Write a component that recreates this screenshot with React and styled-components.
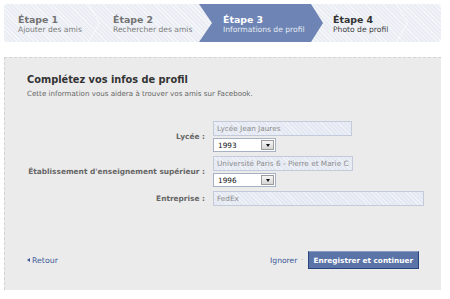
import React from "react";
import styled, { createGlobalStyle } from "styled-components";

const GlobalStyle = createGlobalStyle`
  html, body {
    margin: 0;
    padding: 0;
    background: #fff;
  }
  body {
    font-family: "DejaVu Sans", Tahoma, Verdana, sans-serif;
  }
`;

const Page = styled.div`
  width: 437px;
  padding: 4px 0 0 4px;
`;

const StepBar = styled.div`
  display: flex;
  height: 38px;
  border-radius: 3px;
  overflow: hidden;
  background-color: #eaedf4;
  background-image: repeating-linear-gradient(
    45deg,
    rgba(255, 255, 255, 0.5) 0 1px,
    transparent 1px 3px
  );
`;

const stepColors = {
  done: { title: "#737373", sub: "#7d7d7d" },
  active: { title: "#fff", sub: "#e4e9f2" },
  todo: { title: "#333", sub: "#444" },
};

const Step = styled.div`
  position: relative;
  flex: 0 0 ${(p) => p.$width}px;
  box-sizing: border-box;
  padding: 10px 0 0 ${(p) => p.$pad}px;
  background: ${(p) => (p.$state === "active" ? "#6d84b4" : "transparent")};
  clip-path: ${(p) =>
    p.$state === "active"
      ? "polygon(0 0, calc(100% - 12px) 0, 100% 50%, calc(100% - 12px) 100%, 0 100%, 13px 50%)"
      : "none"};
`;

const StepTitle = styled.div`
  font-weight: bold;
  font-size: 9.4px;
  line-height: 11px;
  white-space: nowrap;
  color: ${(p) => stepColors[p.$state].title};
`;

const StepSub = styled.div`
  font-size: 7.6px;
  line-height: 9px;
  white-space: nowrap;
  color: ${(p) => stepColors[p.$state].sub};
`;

const Chevron = styled.svg`
  position: absolute;
  top: 0;
  right: 0;
`;

const Filler = styled.div`
  flex: 1;
`;

const Panel = styled.section`
  margin-top: 15px;
  height: 233px;
  box-sizing: border-box;
  padding: 15px 22px 21px 22px;
  background: #ebebeb;
  border-top: 1px dashed #d4d4d4;
  border-left: 1px dashed #d4d4d4;
  display: flex;
  flex-direction: column;
`;

const Heading = styled.h2`
  margin: 0;
  font-size: 9.8px;
  line-height: 14px;
  font-weight: bold;
  color: #333;
`;

const Intro = styled.p`
  margin: 2px 0 0;
  font-size: 7.1px;
  line-height: 10px;
  color: #666;
`;

const Form = styled.div`
  display: grid;
  grid-template-columns: 178px 1fr;
  column-gap: 8px;
  row-gap: 4px;
  align-items: center;
  margin-top: 22px;
`;

const Label = styled.label`
  font-size: 7.4px;
  font-weight: bold;
  color: #666;
  text-align: right;
  white-space: nowrap;
`;

const Fields = styled.div`
  display: flex;
  flex-direction: column;
  align-items: flex-start;
  gap: 2px;
`;

const TextField = styled.input`
  width: ${(p) => p.$width}px;
  height: 15px;
  box-sizing: border-box;
  margin: 0;
  padding: 0 3px;
  border: 1px solid #c3cbdb;
  outline: none;
  background-color: #e3e8f2;
  background-image: repeating-linear-gradient(
    45deg,
    rgba(255, 255, 255, 0.45) 0 1px,
    transparent 1px 3px
  );
  font-family: "DejaVu Sans", Tahoma, sans-serif;
  font-size: 7.3px;
  color: #8c8c8c;
`;

const Select = styled.div`
  display: flex;
  align-items: center;
  justify-content: space-between;
  width: 63px;
  height: 14px;
  box-sizing: border-box;
  padding: 0 1px 0 4px;
  border: 1px solid #a7b1c4;
  background: #fff;
  font-size: 7.3px;
  color: #111;
`;

const DropButton = styled.span`
  display: flex;
  align-items: center;
  justify-content: center;
  width: 13px;
  height: 10px;
  box-sizing: border-box;
  border: 1px solid #9c9c9c;
  background: linear-gradient(#f6f6f6, #d6d6d6);

  &::after {
    content: "";
    border-left: 2.5px solid transparent;
    border-right: 2.5px solid transparent;
    border-top: 3px solid #111;
  }
`;

const Footer = styled.div`
  display: flex;
  align-items: center;
  justify-content: space-between;
  margin-top: auto;
`;

const BackLink = styled.a`
  display: flex;
  align-items: center;
  gap: 2px;
  font-size: 7.8px;
  color: #3b5998;
  text-decoration: none;

  &::before {
    content: "";
    border-top: 2.5px solid transparent;
    border-bottom: 2.5px solid transparent;
    border-right: 3px solid #3b5998;
  }
`;

const Actions = styled.div`
  display: flex;
  align-items: center;
`;

const SkipLink = styled.a`
  font-size: 7.6px;
  color: #3b5998;
  text-decoration: none;
`;

const Dot = styled.span`
  margin: 0 4px;
  font-size: 7px;
  color: #aaa;
`;

const PrimaryButton = styled.button`
  height: 18px;
  margin: 0;
  padding: 0 5px;
  border: 1px solid #29447e;
  border-top-color: #8a9cc2;
  background: #5b74a8;
  color: #fff;
  font-family: "DejaVu Sans", Tahoma, sans-serif;
  font-weight: bold;
  font-size: 7.3px;
  white-space: nowrap;
`;

const steps = [
  { title: "Étape 1", sub: "Ajouter des amis", state: "done", width: 96, pad: 14, sep: true },
  { title: "Étape 2", sub: "Rechercher des amis", state: "done", width: 99, pad: 13, sep: false },
  { title: "Étape 3", sub: "Informations de profil", state: "active", width: 124, pad: 24, sep: false },
  { title: "Étape 4", sub: "Photo de profil", state: "todo", width: 85, pad: 10, sep: true },
];

const fields = [
  { label: "Lycée :", value: "Lycée Jean Jaures", width: 139, year: "1993" },
  {
    label: "Établissement d'enseignement supérieur :",
    value: "Université Paris 6 - Pierre et Marie Curie",
    width: 140,
    year: "1996",
  },
  { label: "Entreprise :", value: "FedEx", width: 211 },
];

const App = () => {
  return (
    <Page>
      <GlobalStyle />
      <StepBar>
        {steps.map((step) => (
          <Step key={step.title} $state={step.state} $width={step.width} $pad={step.pad}>
            <StepTitle $state={step.state}>{step.title}</StepTitle>
            <StepSub $state={step.state}>{step.sub}</StepSub>
            {step.sep && (
              <Chevron width="12" height="38" viewBox="0 0 12 38">
                <polyline
                  points="0.5,0 11.5,19 0.5,38"
                  fill="none"
                  stroke="#fff"
                  strokeWidth="1"
                  strokeDasharray="2 1"
                />
              </Chevron>
            )}
          </Step>
        ))}
        <Filler />
      </StepBar>

      <Panel>
        <Heading>Complétez vos infos de profil</Heading>
        <Intro>Cette information vous aidera à trouver vos amis sur Facebook.</Intro>

        <Form>
          {fields.map((field) => (
            <React.Fragment key={field.label}>
              <Label>{field.label}</Label>
              <Fields>
                <TextField $width={field.width} defaultValue={field.value} readOnly />
                {field.year && (
                  <Select>
                    {field.year}
                    <DropButton />
                  </Select>
                )}
              </Fields>
            </React.Fragment>
          ))}
        </Form>

        <Footer>
          <BackLink href="#">Retour</BackLink>
          <Actions>
            <SkipLink href="#">Ignorer</SkipLink>
            <Dot>·</Dot>
            <PrimaryButton>Enregistrer et continuer</PrimaryButton>
          </Actions>
        </Footer>
      </Panel>
    </Page>
  );
};

export default App;
